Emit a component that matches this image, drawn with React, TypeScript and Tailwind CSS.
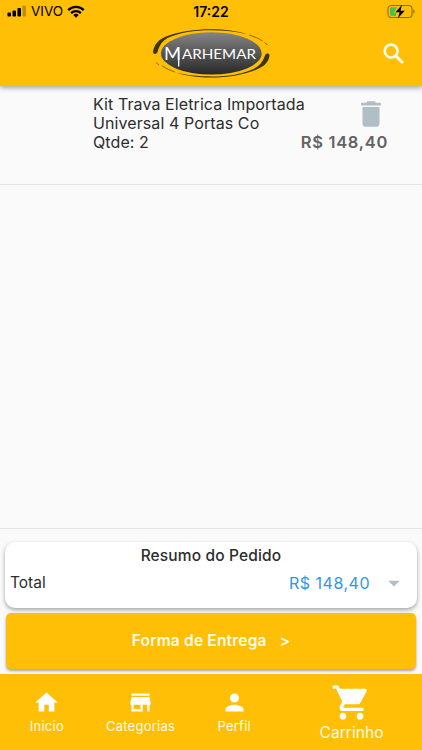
import React from "react";
import { MdArrowDropDown, MdDelete, MdHome, MdPerson, MdShoppingCart } from "react-icons/md";

function StatusBar() {
  return (
    <div className="flex h-6 items-center justify-between pl-[7px] pr-[7px] text-black">
      <div className="flex w-[150px] items-center">
        <svg width="19" height="12" viewBox="0 0 19 12" className="-mt-[2px]">
          <rect x="0.5" y="7.5" width="3.5" height="4" rx="0.8" />
          <rect x="5.5" y="5.5" width="3.5" height="6" rx="0.8" />
          <rect x="10.5" y="3" width="3.5" height="8.5" rx="0.8" />
          <rect x="15.5" y="0.5" width="3.5" height="11" rx="0.8" opacity="0.25" />
        </svg>
        <span className="ml-[5px] w-[31px] text-[13.5px] leading-none">VIVO</span>
        <svg width="18" height="13" viewBox="0 0 18 13" className="-mt-px ml-[5px]" fill="none" stroke="black" strokeWidth="2.3">
          <path d="M1.2 5.1a11 11 0 0 1 15.6 0" />
          <path d="M4.1 8.1a6.9 6.9 0 0 1 9.8 0" />
          <path d="M9 12.7 6.3 10a3.8 3.8 0 0 1 5.4 0z" fill="black" stroke="none" />
        </svg>
      </div>
      <span className="text-[14px] font-semibold leading-none">17:22</span>
      <div className="flex w-[150px] justify-end">
        <svg width="28" height="15" viewBox="0 0 28 15" className="-mt-[2px]">
          <rect x="1" y="1.5" width="24" height="12" rx="3.2" fill="none" stroke="#8f6c05" strokeWidth="1.1" />
          <path d="M26.4 5.2v4.6c1.5-.6 1.5-4 0-4.6z" fill="#8f6c05" />
          <path d="M4.4 3.2H10L6.8 8.8H9.6L8.8 12H4.4a1.4 1.4 0 0 1-1.4-1.4V4.6a1.4 1.4 0 0 1 1.4-1.4z" fill="#43c451" />
          <path d="M15 0.8 8.4 8.2h4.2L10.9 14.2 17.8 6.7h-4.3z" fill="black" />
        </svg>
      </div>
    </div>
  );
}

function Logo() {
  return (
    <svg width="120" height="52" viewBox="0 0 120 52" className="block">
      <defs>
        <linearGradient id="oval" x1="0" y1="0" x2="0" y2="1">
          <stop offset="0" stopColor="#858585" />
          <stop offset="0.5" stopColor="#565656" />
          <stop offset="1" stopColor="#282828" />
        </linearGradient>
      </defs>
      <ellipse cx="60.3" cy="26.4" rx="50.3" ry="21.2" fill="url(#oval)" />
      <path d="M2 25C3 17 8 12.500 15 9.500 28 4.500 44 2.200 60 2.200c14 0 26 1.600 36 5-10-2.600-22-3.900-36-3.900-17 0-31 2.400-43 7.400C11.500 13.500 8.500 18 6.500 25c-.8 2.600-4.600 2.400-4.500 0z" fill="#403308" />
      <path d="M98 8c5 1.600 10 3.600 13.500 6M113.500 15.500l3 2.500" fill="none" stroke="#6a520a" strokeWidth="0.8" />
      <path d="M118.500 28.500c-1 8-7 11.500-14 14.500-13 5-28 7.600-44 7.600-14 0-26-1.600-35-5 10 2.600 21 3.900 35 3.900 17 0 31-2.600 42-7.600 6-3 9-6.500 11.500-13.400 1-2.600 4.600-2.400 4.500 0z" fill="#403308" />
      <path d="M24 45c-5-1.600-9-3.600-13-6.200M8 38l-3-2.500" fill="none" stroke="#6a520a" strokeWidth="0.8" />
      <path d="M27.700 24v15.500" stroke="white" strokeWidth="1.3" />
      <g fill="white" fontFamily="Lato, sans-serif">
        <text x="13" y="33" fontSize="18" textLength="17" lengthAdjust="spacingAndGlyphs">M</text>
        <text x="31" y="32" fontSize="14" textLength="74" lengthAdjust="spacingAndGlyphs">ARHEMAR</text>
      </g>
    </svg>
  );
}

function SearchIcon() {
  return (
    <svg width="28" height="28" viewBox="0 0 24 24" fill="none" stroke="currentColor">
      <circle cx="9.5" cy="9.5" r="5.500" strokeWidth="2.300" />
      <path d="M13.800 13.800 19.700 19.700" strokeWidth="2.500" />
    </svg>
  );
}

function StoreIcon() {
  return (
    <svg width="27" height="27" viewBox="0 0 24 24" fill="white">
      <path d="M20 4H4v2h16V4zm1 10v-2l-1-5H4l-1 5v2h1v6h10v-6h4v6h2v-6h1zm-9 4H6v-4h6v4z" />
    </svg>
  );
}

function NavItem({ icon, label }: { icon: React.ReactNode; label: string }) {
  return (
    <div className="flex w-[93.7px] flex-col items-center pt-[15px]">
      {icon}
      <span className="mt-px whitespace-nowrap text-[13px] leading-[18px] tracking-[0.25px]">{label}</span>
    </div>
  );
}

export default function App() {
  return (
    <div className="flex h-[750px] w-[422px] flex-col overflow-hidden bg-[#fafafa] font-['Inter',sans-serif] text-[#2d2d2d]">
      <header className="z-10 h-[86px] shrink-0 bg-[#ffbf07] shadow-[0_2px_5px_rgba(0,0,0,0.35)]">
        <StatusBar />
        <div className="flex h-[62px] items-start justify-between pt-[3px]">
          <div className="w-[151px]" />
          <Logo />
          <div className="flex w-[151px] justify-end pr-[14px] pt-[13px] text-[#fffbe9]">
            <SearchIcon />
          </div>
        </div>
      </header>

      <main className="flex-1 border-b border-[#e6e6e6]">
        <div className="flex h-[99px] border-b border-[#e6e6e6] pl-[93px] pt-[9px] text-[16px] leading-[19px]">
          <div className="w-[208px] whitespace-nowrap tracking-[0.09px]">
            <p>Kit Trava Eletrica Importada</p>
            <p>Universal 4 Portas Co</p>
            <p>Qtde: 2</p>
          </div>
          <div className="flex w-[87px] flex-col items-end">
            <MdDelete size={34} className="mt-[2px] text-[#b0bec5]" />
            <span className="mt-[2px] whitespace-nowrap text-[16.5px] font-semibold tracking-[0.7px] text-[#636363]">R$ 148,40</span>
          </div>
        </div>
      </main>

      <section className="mx-[5px] mt-[13px] h-[66px] shrink-0 rounded-[10px] bg-white pt-[4px] shadow-[0_2px_4px_rgba(0,0,0,0.35)]">
        <h2 className="text-center text-[15.5px] font-medium leading-[20px] tracking-[0.15px]">Resumo do Pedido</h2>
        <div className="flex h-[33px] items-center pl-[5px] pr-[9px] text-[16px]">
          <span className="flex-1 text-[15.5px]">Total</span>
          <span className="tracking-[0.5px] text-[#3396e3]">R$ 148,40</span>
          <MdArrowDropDown size={28} className="ml-[10px] text-[#b0bec5]" />
        </div>
      </section>

      <button className="mx-[6px] mt-[5px] flex h-[56px] shrink-0 items-center justify-center rounded-[5px] bg-[#ffbf07] pb-px text-[15.5px] font-semibold tracking-[0.2px] text-[#fffbe9] shadow-[0_2px_3px_rgba(0,0,0,0.35)]">
        <span>Forma de Entrega</span>
        <span className="ml-[13px]">&gt;</span>
      </button>

      <nav className="mt-[5px] flex h-[76px] shrink-0 bg-[#ffbf07] text-[#fffbe9]">
        <NavItem icon={<MdHome size={27} className="text-white" />} label="Inicio" />
        <NavItem icon={<StoreIcon />} label="Categorias" />
        <NavItem icon={<MdPerson size={27} className="text-white" />} label="Perfil" />
        <div className="flex flex-1 flex-col items-center pt-[8px]">
          <MdShoppingCart size={41} className="text-white" />
          <span className="text-[15.5px] leading-[20px] tracking-[0.05px]">Carrinho</span>
        </div>
      </nav>
    </div>
  );
}
